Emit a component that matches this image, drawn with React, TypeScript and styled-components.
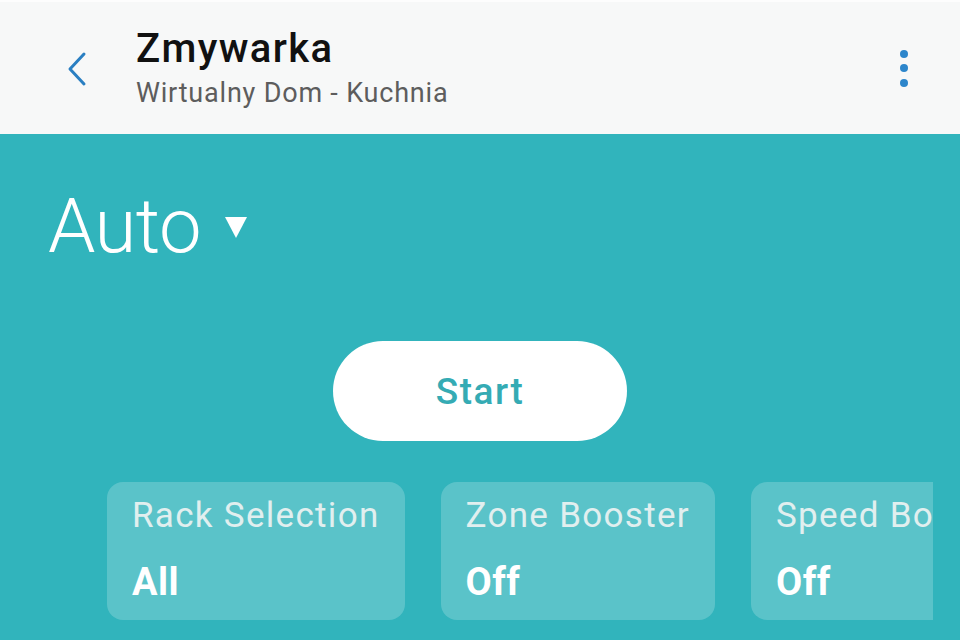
import React from "react";
import styled, { createGlobalStyle } from "styled-components";

const Global = createGlobalStyle`
  html, body { margin: 0; padding: 0; }
  body { width: 960px; height: 640px; overflow: hidden; font-family: Roboto, "Noto Sans", sans-serif; background: #31b4bc; }
`;

const Page = styled.div`
  width: 960px;
  height: 640px;
  display: flex;
  flex-direction: column;
  background: #31b4bc;
  overflow: hidden;
`;

const Header = styled.header`
  height: 134px;
  flex: none;
  background: #f7f8f8;
  border-top: 2px solid #fdfdfd;
  box-sizing: border-box;
  display: flex;
  align-items: center;
  padding: 0 52px 0 60px;
`;

const BackButton = styled.div`
  width: 34px;
  height: 40px;
  display: flex;
  align-items: center;
  justify-content: center;
  margin-top: 2px;
`;

const Titles = styled.div`
  flex: 1;
  display: flex;
  flex-direction: column;
  margin-left: 42px;
  margin-top: 0px;
`;

const Title = styled.div`
  font-size: 40px;
  font-weight: 500;
  color: #111;
  line-height: 46px;
  letter-spacing: 1.4px;
`;

const Subtitle = styled.div`
  font-size: 27px;
  color: #5d5d5d;
  line-height: 36px;
  margin-top: 3px;
  letter-spacing: 0.8px;
`;

const Dots = styled.div`
  display: flex;
  flex-direction: column;
  gap: 6.5px;
  margin-top: 0px;
`;

const Dot = styled.span`
  width: 8px;
  height: 8px;
  border-radius: 50%;
  background: #2d86cb;
`;

const Body = styled.main`
  flex: 1;
  display: flex;
  flex-direction: column;
`;

const ModeRow = styled.div`
  display: flex;
  align-items: center;
  padding: 48px 0 0 48px;
  gap: 24px;
  color: #fff;
`;

const ModeLabel = styled.div`
  font-size: 76px;
  font-weight: 300;
  line-height: 88px;
  letter-spacing: -0.5px;
`;

const Caret = styled.div`
  width: 0;
  height: 0;
  border-left: 11.5px solid transparent;
  border-right: 11.5px solid transparent;
  border-top: 21px solid #fff;
  margin-top: 2px;
`;

const StartRow = styled.div`
  display: flex;
  justify-content: center;
  margin-top: 71px;
`;

const StartButton = styled.button`
  width: 294px;
  height: 100px;
  border: none;
  border-radius: 50px;
  background: #fff;
  color: #35abb4;
  font-family: Roboto, sans-serif;
  font-size: 37px;
  font-weight: 500;
  letter-spacing: 1.5px;
  padding: 0;
`;

const Cards = styled.div`
  display: flex;
  gap: 36px;
  margin: 41px 0 0 107px;
  width: 826px;
  overflow: hidden;
`;

const Card = styled.div`
  flex: none;
  height: 138px;
  box-sizing: border-box;
  padding: 14px 25px 0 25px;
  border-radius: 16px;
  background: rgba(255, 255, 255, 0.2);
  display: flex;
  flex-direction: column;
`;

const CardLabel = styled.div`
  font-size: 35px;
  color: #e1efef;
  line-height: 40px;
  letter-spacing: 1.3px;
  white-space: nowrap;
`;

const CardValue = styled.div`
  font-size: 38px;
  font-weight: 700;
  color: #fff;
  line-height: 44px;
  margin-top: 24px;
  letter-spacing: 0.5px;
`;

const cards = [
  { label: "Rack Selection", value: "All" },
  { label: "Zone Booster", value: "Off" },
  { label: "Speed Booster", value: "Off" },
];

export default function App() {
  return (
    <Page>
      <Global />
      <Header>
        <BackButton>
          <svg width="24" height="36" viewBox="0 0 24 36">
            <path d="M19 3 L5 18 L19 33" fill="none" stroke="#2a7fc2" strokeWidth="3" strokeLinecap="round" strokeLinejoin="round" />
          </svg>
        </BackButton>
        <Titles>
          <Title>Zmywarka</Title>
          <Subtitle>Wirtualny Dom - Kuchnia</Subtitle>
        </Titles>
        <Dots>
          <Dot />
          <Dot />
          <Dot />
        </Dots>
      </Header>
      <Body>
        <ModeRow>
          <ModeLabel>Auto</ModeLabel>
          <Caret />
        </ModeRow>
        <StartRow>
          <StartButton>Start</StartButton>
        </StartRow>
        <Cards>
          {cards.map((c) => (
            <Card key={c.label}>
              <CardLabel>{c.label}</CardLabel>
              <CardValue>{c.value}</CardValue>
            </Card>
          ))}
        </Cards>
      </Body>
    </Page>
  );
}
